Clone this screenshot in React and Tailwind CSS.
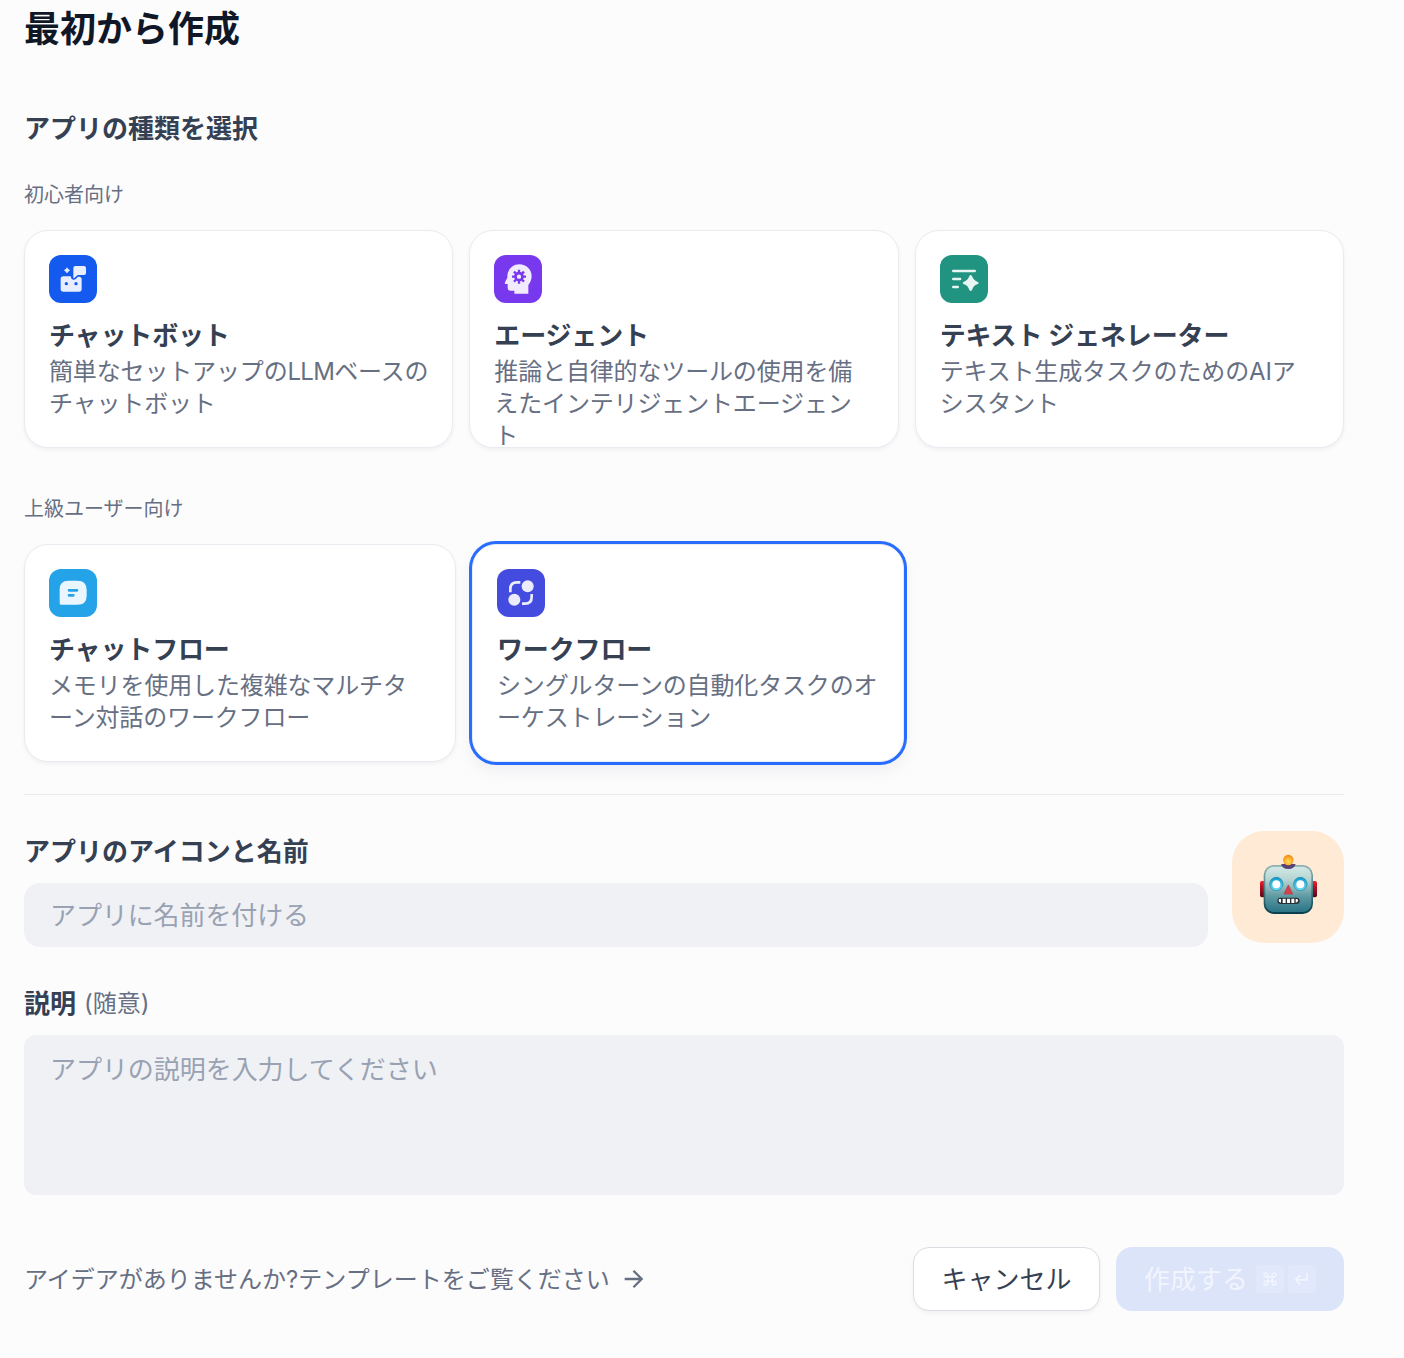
import React from "react";
import { RiArrowRightLine, RiCommandLine, RiCornerDownLeftLine } from "react-icons/ri";

const ChatbotIcon = () => (
  <svg className="size-12 shrink-0 rounded-xl bg-[#155aef]" viewBox="27 30 144 144" fill="#e8eefd">
    <path d="M81 68Q83 73 89 76Q83 79 81 84Q79 79 73 76Q79 73 81 68Z" stroke="#e8eefd" strokeWidth="2" />
    <path d="M106 63H132Q138 63 138 69V84Q138 90 132 90H113L103 99Q100 101 100 97V69Q100 63 106 63Z" />
    <path
      fillRule="evenodd"
      d="M70 94H92Q93 103 100 104Q104 105 108 101L114 95H117Q125 95 125 103V132Q125 140 117 140H70Q62 140 62 132V102Q62 94 70 94ZM79 111A5 5 0 1 0 79 121A5 5 0 1 0 79 111ZM108 111A5 5 0 1 0 108 121A5 5 0 1 0 108 111Z"
    />
  </svg>
);

const AgentIcon = () => (
  <svg className="size-12 shrink-0 rounded-xl bg-[#7839ee]" viewBox="27 30 144 144" fill="#f1ebfd">
    <path d="M103 58C124 58 140 74 140 94C140 105 135 114 130 120V146H88V137H76Q68 137 68 129V117H62Q58 117 60 112L67 98V94C67 74 83 58 103 58Z" />
    <g stroke="#7839ee" strokeWidth="8" fill="none">
      <circle cx="102" cy="95" r="10.5" />
      <path d="M102 83V74M102 107V116M90 95H81M114 95H123M93.500 86.500L87 80M110.500 103.500L117 110M110.500 86.500L117 80M93.500 103.500L87 110" strokeWidth="7" />
    </g>
  </svg>
);

const TextGeneratorIcon = () => (
  <svg className="size-12 shrink-0 rounded-xl bg-[#209481]" viewBox="30 30 144 144" fill="#e9f5f3">
    <path d="M70 78H134M70 102H90M70 126H83" stroke="#e9f5f3" strokeWidth="8" strokeLinecap="round" />
    <path d="M118 93Q122 87 126 93Q130 106 142 110Q150 114 142 118Q130 122 126 135Q122 141 118 135Q114 122 102 118Q94 114 102 110Q114 106 118 93Z" />
  </svg>
);

const ChatflowIcon = () => (
  <svg className="size-12 shrink-0 rounded-xl bg-[#24a3e8]" viewBox="27 27 144 144" fill="#e9f6fd">
    <path d="M85 62H112Q140 62 140 90V107Q140 134 112 134H63Q59 134 59 130V88Q59 62 85 62Z" />
    <path d="M87 91H111M87 106H100" stroke="#24a3e8" strokeWidth="8" strokeLinecap="round" />
  </svg>
);

const WorkflowIcon = () => (
  <svg className="size-12 shrink-0 rounded-xl bg-[#444ce0]" viewBox="27 27 144 144" fill="#ecedfc">
    <circle cx="119" cy="79" r="18" />
    <circle cx="79" cy="119" r="18" />
    <path d="M67 97V87Q67 67 87 67H97M131 102V111Q131 131 111 131H102" fill="none" stroke="#ecedfc" strokeWidth="8" />
  </svg>
);

const RobotIcon = () => (
  <svg className="size-28 shrink-0 rounded-[32px] bg-[#ffead5]" viewBox="21 18 336 336">
    <defs>
      <linearGradient id="face" x1="0" y1="0" x2="0" y2="1">
        <stop offset="0" stopColor="#d3e9e6" />
        <stop offset=".3" stopColor="#b4d3d2" />
        <stop offset=".65" stopColor="#5f9aa3" />
        <stop offset="1" stopColor="#2b7486" />
      </linearGradient>
      <linearGradient id="edge" x1="0" y1="0" x2="0" y2="1">
        <stop offset="0" stopColor="#8fb3b1" />
        <stop offset=".5" stopColor="#4c7f86" />
        <stop offset="1" stopColor="#053e4c" />
      </linearGradient>
      <linearGradient id="ear" x1="0" y1="0" x2="0" y2="1">
        <stop offset="0" stopColor="#f0202c" />
        <stop offset=".45" stopColor="#a80e22" />
        <stop offset="1" stopColor="#56091b" />
      </linearGradient>
      <linearGradient id="eye" x1="0" y1="0" x2="0" y2="1">
        <stop offset="0" stopColor="#079bd0" />
        <stop offset="1" stopColor="#6ee0f5" />
      </linearGradient>
      <radialGradient id="bulb" cx=".5" cy=".65" r=".6">
        <stop offset="0" stopColor="#ffe45c" />
        <stop offset="1" stopColor="#f58a13" />
      </radialGradient>
    </defs>
    <rect x="105" y="168" width="16" height="49" rx="6" fill="url(#ear)" />
    <rect x="260" y="168" width="16" height="49" rx="6" fill="url(#ear)" />
    <rect x="116" y="120" width="148" height="147" rx="31" fill="url(#edge)" />
    <rect x="121" y="125" width="138" height="136" rx="26" fill="url(#face)" />
    <path d="M168 118Q190 113 212 118Q208 132 190 132Q172 132 168 118Z" fill="#594374" />
    <circle cx="190" cy="105" r="15.500" fill="url(#bulb)" />
    <circle cx="154" cy="177" r="20" fill="url(#eye)" stroke="#257f9b" strokeWidth="2" />
    <circle cx="226" cy="177" r="20" fill="url(#eye)" stroke="#257f9b" strokeWidth="2" />
    <circle cx="154" cy="178" r="12" fill="#fff" />
    <circle cx="226" cy="178" r="12" fill="#fff" />
    <path d="M190 180L203 207H177Z" fill="#d3434a" stroke="#b33642" strokeWidth="2" strokeLinejoin="round" />
    <rect x="157" y="218" width="67" height="19" rx="9.500" fill="#263137" />
    <path d="M163 222H168V233Q161 231 161 227Q161 223 163 222ZM173 221H182V234H173ZM186 221H195V234H186ZM199 221H208V234H199ZM212 222H217Q219 224 219 227Q219 231 212 233Z" fill="#fafafa" />
  </svg>
);

const beginner = [
  {
    Icon: ChatbotIcon,
    title: "チャットボット",
    lines: [<>簡単なセットアップの<span className="tracking-[-0.7px]">LLM</span>ベースの</>, "チャットボット"],
  },
  { Icon: AgentIcon, title: "エージェント", lines: ["推論と自律的なツールの使用を備", "えたインテリジェントエージェン", "ト"] },
  { Icon: TextGeneratorIcon, title: "テキスト ジェネレーター", lines: ["テキスト生成タスクのためのAIア", "シスタント"] },
];

const advanced = [
  { Icon: ChatflowIcon, title: "チャットフロー", lines: ["メモリを使用した複雑なマルチタ", "ーン対話のワークフロー"] },
  { Icon: WorkflowIcon, title: "ワークフロー", lines: ["シングルターンの自動化タスクのオ", "ーケストレーション"], selected: true },
];

function AppCard({ Icon, title, lines, selected }) {
  return (
    <button
      type="button"
      className={
        "flex h-[218px] flex-col items-start overflow-hidden rounded-3xl border border-[#e9ebf0] bg-white px-6 pt-6 text-left " +
        (selected
          ? "shadow-[0_0_0_3px_#296dff,0_8px_16px_2px_rgba(16,24,40,0.05)]"
          : "shadow-[0_2px_4px_rgba(16,24,40,0.05)]")
      }
    >
      <Icon />
      <div className="mt-[17px] h-8 shrink-0 text-[26px] leading-8 font-bold tracking-[-0.15px] whitespace-nowrap">{title}</div>
      <div className="mt-1 shrink-0 text-2xl leading-8 tracking-[-0.15px] whitespace-nowrap text-[#676f83]">
        {lines.map((line, i) => <div key={i}>{line}</div>)}
      </div>
    </button>
  );
}

export default function App() {
  return (
    <main
      lang="ja"
      className="h-[1358px] w-[1404px] overflow-hidden bg-[#fcfcfd] pr-[60px] pl-6 font-['Inter','Noto_Sans_CJK_JP',sans-serif] text-[#354052]"
    >
      <h1 className="pt-[7px] text-4xl leading-[44px] font-bold text-[#101828]">最初から作成</h1>
      <h2 className="mt-[58px] text-[26px] leading-10 font-bold">アプリの種類を選択</h2>
      <p className="mt-8 text-xl leading-7 text-[#676f83]">初心者向け</p>
      <section className="mt-[21px] grid grid-cols-3 gap-4">
        {beginner.map((app) => <AppCard key={app.title} {...app} />)}
      </section>
      <p className="mt-[47px] text-xl leading-7 text-[#676f83]">上級ユーザー向け</p>
      <section className="mt-[21px] grid grid-cols-[432px_432px] gap-4">
        {advanced.map((app) => <AppCard key={app.title} {...app} />)}
      </section>
      <hr className="mt-8 border-[#e9eaec]" />
      <section className="mt-9 flex gap-6">
        <div className="flex-1">
          <label htmlFor="name" className="mt-px block text-[26px] leading-10 font-bold">アプリのアイコンと名前</label>
          <input id="name" placeholder="アプリに名前を付ける" className="mt-[11px] block h-16 w-full rounded-2xl bg-[#f0f1f5] px-[26px] text-[26px] tracking-[-0.1px] placeholder:text-[#98a2b2]" />
        </div>
        <RobotIcon />
      </section>
      <section className="mt-[37px]">
        <label htmlFor="description" className="flex h-10 items-center gap-2 text-[26px] leading-10 font-bold">
          説明 <span className="text-2xl font-normal text-[#676f83]">(随意)</span>
        </label>
        <textarea id="description" placeholder="アプリの説明を入力してください" className="mt-[11px] block h-40 w-full resize-none rounded-xl bg-[#f0f1f5] px-[26px] py-[15px] text-[26px] leading-10 tracking-[-0.05px] placeholder:text-[#98a2b2]" />
      </section>
      <footer className="mt-[52px] flex h-16 items-center">
        <a href="#templates" className="flex items-center gap-2.5 text-2xl text-[#676f83]">
          <span className="pt-0.5">アイデアがありませんか?テンプレートをご覧ください</span>
          <RiArrowRightLine className="size-7" />
        </a>
        <div className="ml-auto flex gap-4">
          <button type="button" className="flex h-16 w-[187px] items-center justify-center rounded-2xl border border-[#dcdee3] bg-white text-[26px] shadow-[0_2px_4px_rgba(16,24,40,0.05)]">キャンセル</button>
          <button type="button" className="flex h-16 w-[228px] items-center rounded-2xl bg-[#dce4fa] pl-7 text-[26px] text-[#f2f5fd]">
            作成する
            <span className="ml-2 flex gap-1">
              <kbd className="flex size-7 items-center justify-center rounded bg-[#e1e8fb]"><RiCommandLine className="size-[18px]" /></kbd>
              <kbd className="flex size-7 items-center justify-center rounded bg-[#e1e8fb]"><RiCornerDownLeftLine className="size-5" /></kbd>
            </span>
          </button>
        </div>
      </footer>
    </main>
  );
}
